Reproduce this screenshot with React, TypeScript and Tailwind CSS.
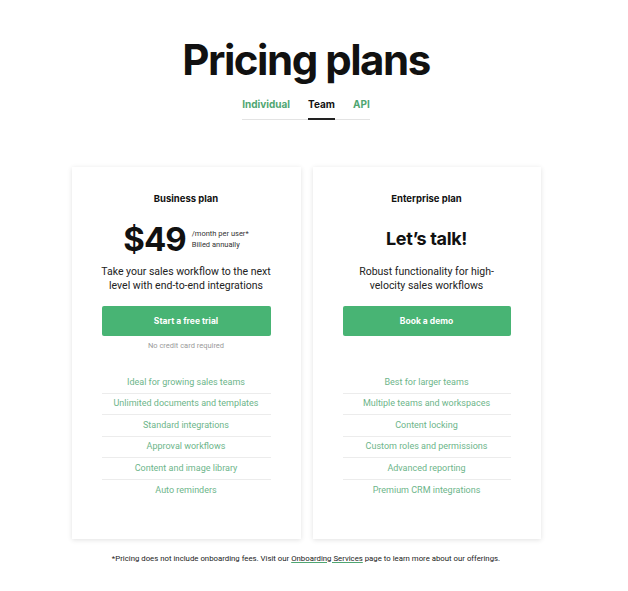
import React from 'react';

const businessFeatures = [
  'Ideal for growing sales teams',
  'Unlimited documents and templates',
  'Standard integrations',
  'Approval workflows',
  'Content and image library',
  'Auto reminders',
];

const enterpriseFeatures = [
  'Best for larger teams',
  'Multiple teams and workspaces',
  'Content locking',
  'Custom roles and permissions',
  'Advanced reporting',
  'Premium CRM integrations',
];

const FeatureList: React.FC<{ items: string[] }> = ({ items }) => (
  <ul className="mt-[21px] flex flex-col font-['Roboto',sans-serif]">
    {items.map((item, i) => (
      <li
        key={item}
        className={`flex h-[21.6px] items-center justify-center text-[9px] text-[#6db58a] ${
          i < items.length - 1 ? 'border-b border-[#ececec]' : ''
        }`}
      >
        {item}
      </li>
    ))}
  </ul>
);

export default function App() {
  return (
    <div className="min-h-[591px] w-[628px] bg-white font-['Inter',sans-serif] text-[#111]">
      <div className="flex w-[612px] flex-col items-center">
        {/* Heading */}
        <h1 className="mt-[35px] text-[42px] leading-[50px] font-bold tracking-[-0.035em] text-[#111]">
          Pricing plans
        </h1>

        {/* Tabs */}
        <div className="mt-[12px] flex gap-[18px] border-b border-[#e3e3e3] text-[10px] font-bold">
          <span className="pb-[8px] leading-[14px] text-[#4fa672]">Individual</span>
          <span className="-mb-px border-b-2 border-[#222] pb-[7px] leading-[14px] text-[#111]">Team</span>
          <span className="pb-[8px] leading-[14px] text-[#4fa672]">API</span>
        </div>

        {/* Cards */}
        <div className="mt-[47px] flex gap-[12px]">
          {/* Business */}
          <div className="flex w-[229px] flex-col px-[30px] pt-[26px] pb-[37px] text-center shadow-[0_1px_5px_rgba(0,0,0,0.12)]">
            <h2 className="text-[9.5px] leading-[12px] font-bold">Business plan</h2>
            <div className="mt-[16px] flex h-[36px] items-center justify-center gap-[6px]">
              <span className="text-[33px] leading-[36px] font-bold tracking-[-0.03em]">$49</span>
              <div className="flex flex-col text-left font-['Roboto',sans-serif] text-[7.5px] leading-[11px] text-[#333]">
                <span>/month per user*</span>
                <span>Billed annually</span>
              </div>
            </div>
            <p className="-mx-[10px] mt-[8px] whitespace-nowrap font-['Roboto',sans-serif] text-[10.5px] leading-[14px] text-[#222]">
              Take your sales workflow to the next
              <br />
              level with end-to-end integrations
            </p>
            <button className="mt-[13px] h-[30px] rounded-[2px] bg-[#48b474] text-[8.5px] font-bold text-white">
              Start a free trial
            </button>
            <p className="mt-[5px] font-['Roboto',sans-serif] text-[7.5px] leading-[10px] text-[#9a9a9a]">
              No credit card required
            </p>
            <FeatureList items={businessFeatures} />
          </div>

          {/* Enterprise */}
          <div className="flex w-[228px] flex-col px-[30px] pt-[26px] pb-[37px] text-center shadow-[0_1px_5px_rgba(0,0,0,0.12)]">
            <h2 className="text-[9.5px] leading-[12px] font-bold">Enterprise plan</h2>
            <div className="mt-[16px] flex h-[36px] items-center justify-center">
              <span className="text-[18px] leading-[24px] font-bold tracking-[-0.02em]">Let’s talk!</span>
            </div>
            <p className="mt-[8px] font-['Roboto',sans-serif] text-[10.5px] leading-[14px] text-[#222]">
              Robust functionality for high-
              <br />
              velocity sales workflows
            </p>
            <button className="mt-[13px] h-[30px] rounded-[2px] bg-[#48b474] text-[8.5px] font-bold text-white">
              Book a demo
            </button>
            <div className="mt-[5px] h-[10px]" />
            <FeatureList items={enterpriseFeatures} />
          </div>
        </div>

        {/* Footnote */}
        <p className="mt-[15px] font-['Roboto',sans-serif] text-[7.8px] leading-[10px] text-[#222]">
          *Pricing does not include onboarding fees. Visit our{' '}
          <a className="underline decoration-[#4fa672]">Onboarding Services</a> page to learn more about our
          offerings.
        </p>
      </div>
    </div>
  );
}
